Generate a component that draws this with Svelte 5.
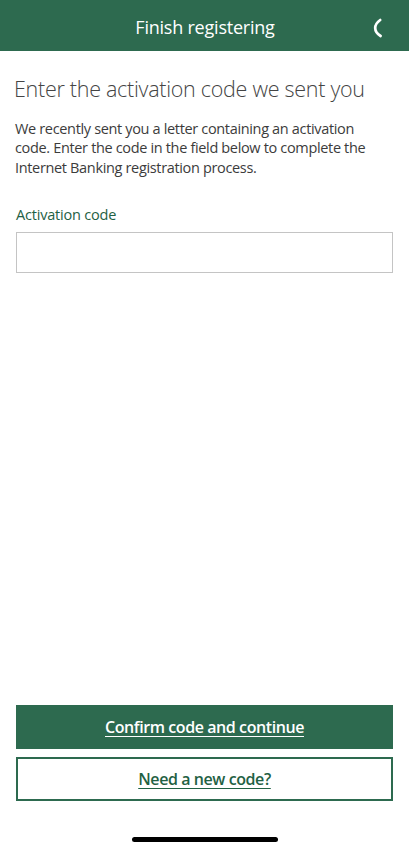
<script lang="ts">
	let code = $state('');
</script>

<div class="screen">
	<header class="topbar">
		<span class="topbar-title">Finish registering</span>
		<button class="call" aria-label="Call us">
			<svg width="12" height="20" viewBox="0 0 12 20">
				<path d="M8.2 2 C4.6 4.6 3.2 7.4 3.2 10 C3.2 12.8 4.8 15.6 8.6 18" fill="none" stroke="#fff" stroke-width="2.7" stroke-linecap="round" />
			</svg>
		</button>
	</header>

	<main class="content">
		<h1>Enter the activation code we sent you</h1>
		<p>We recently sent you a letter containing an activation code. Enter the code in the field below to complete the Internet Banking registration process.</p>
		<label for="activation">Activation code</label>
		<input id="activation" type="text" bind:value={code} />
	</main>

	<footer class="actions">
		<a class="btn primary" href="#confirm">Confirm code and continue</a>
		<a class="btn secondary" href="#new-code">Need a new code?</a>
		<div class="home-bar"></div>
	</footer>
</div>

<style>
	:global(body) {
		margin: 0;
		background: #fff;
	}

	.screen {
		display: flex;
		flex-direction: column;
		height: 850px;
		font-family: 'Open Sans', 'Noto Sans', sans-serif;
		color: #404040;
	}

	.topbar {
		display: flex;
		align-items: center;
		justify-content: center;
		position: relative;
		height: 51px;
		background: #2d6a4f;
		color: #fff;
		flex-shrink: 0;
	}

	.topbar-title {
		font-size: 18px;
		letter-spacing: -0.22px;
		padding-top: 3px;
		padding-left: 1px;
	}

	.call {
		position: absolute;
		right: 25px;
		top: 18px;
		padding: 0;
		border: 0;
		background: none;
		line-height: 0;
	}

	.content {
		flex: 1;
		padding: 0 16px;
	}

	h1 {
		margin: 24px 0 0 -2px;
		font-size: 21.5px;
		font-weight: 300;
		line-height: 28px;
		letter-spacing: -0.28px;
		color: #444;
		white-space: nowrap;
	}

	p {
		max-width: 355px;
		margin: 16px 0 0 -1px;
		font-size: 14.5px;
		line-height: 19.3px;
		letter-spacing: -0.34px;
		color: #3c3c3c;
	}

	label {
		display: block;
		margin-top: 28px;
		font-size: 14.5px;
		line-height: 20px;
		letter-spacing: -0.2px;
		color: #1f6144;
	}

	input {
		display: block;
		box-sizing: border-box;
		width: 100%;
		height: 41px;
		margin-top: 7.5px;
		border: 1px solid #c4c4c4;
		border-radius: 0;
		background: #fff;
		outline: none;
	}

	.actions {
		display: flex;
		flex-direction: column;
		padding: 0 16px;
		flex-shrink: 0;
	}

	.btn {
		display: flex;
		align-items: center;
		justify-content: center;
		box-sizing: border-box;
		height: 44px;
		font-size: 16px;
		font-weight: 600;
		letter-spacing: -0.42px;
		text-underline-offset: 3px;
	}

	.primary {
		background: #2d6a4f;
		color: #fff;
	}

	.secondary {
		margin-top: 8px;
		border: 2px solid #2d6a4f;
		color: #1f6144;
	}

	.home-bar {
		align-self: center;
		width: 146px;
		height: 5px;
		margin: 36px 0 8px;
		border-radius: 3px;
		background: #000;
	}
</style>
